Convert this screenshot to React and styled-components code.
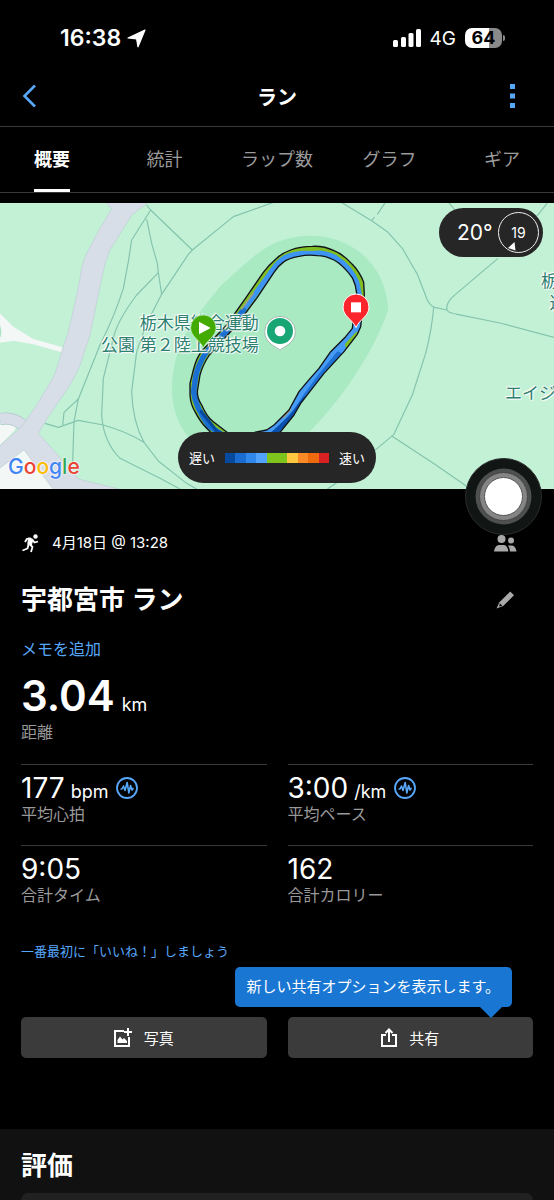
import React from 'react';
import styled, { createGlobalStyle } from 'styled-components';

const Global = createGlobalStyle`
  *, *::before, *::after { box-sizing: border-box; }
  body {
    margin: 0;
    background: #000;
    color: #fff;
    font-family: Inter, "Noto Sans CJK JP", sans-serif;
  }
  button { font-family: inherit; border: 0; background: none; padding: 0; color: inherit; cursor: pointer; }
  a { text-decoration: none; }
  svg { display: block; }
`;

const Page = styled.main`
  display: flex;
  flex-direction: column;
  min-height: 100vh;
`;

const StatusBar = styled.div`
  display: flex;
  align-items: center;
  justify-content: space-between;
  height: 66px;
  padding: 10px 52px 0 60px;
`;
const StatusGroup = styled.div`
  display: flex;
  align-items: center;
  gap: ${(p) => p.$gap}px;
`;
const Clock = styled.span`font-size: 23px; font-weight: 600;`;
const Network = styled.span`font-size: 19px;`;
const Battery = styled.div`
  position: relative;
  width: 37px;
  height: 20px;
  border-radius: 7px;
  background: linear-gradient(90deg, #fff 64%, #8a8a8a 64%);
  color: #000;
  font-size: 18px;
  line-height: 20px;
  font-weight: 700;
  text-align: center;
  &::after {
    content: "";
    position: absolute;
    right: -3px;
    top: 7px;
    width: 2px;
    height: 6px;
    border-radius: 0 2px 2px 0;
    background: #8a8a8a;
  }
`;

const Header = styled.header`
  display: grid;
  grid-template-columns: 40px 1fr 40px;
  align-items: center;
  height: 61px;
  padding: 0 22px;
  border-bottom: 1px solid #3a3a3a;
`;
const HeaderButton = styled.button`
  display: flex;
  justify-content: ${(p) => p.$align};
`;
const HeaderTitle = styled.h1`
  margin: 0;
  font-size: 20px;
  font-weight: 600;
  text-align: center;
`;

const Tabs = styled.nav`
  display: flex;
  justify-content: space-between;
  height: 66px;
  padding: 0 16px;
  border-bottom: 1px solid #3a3a3a;
`;
const Tab = styled.button`
  display: flex;
  justify-content: center;
  width: 72px;
  font-size: 18px;
  white-space: nowrap;
  font-weight: ${(p) => (p.$active ? 700 : 400)};
  color: ${(p) => (p.$active ? '#fff' : '#9b9b9b')};
  span {
    display: flex;
    align-items: center;
    height: 65px;
    border-bottom: 3px solid ${(p) => (p.$active ? '#fff' : 'transparent')};
  }
`;

const MapPanel = styled.section`
  position: relative;
  height: 286px;
  margin-top: 10px;
`;
const MapArt = styled.svg`
  width: 100%;
  height: 100%;
`;
const MapClip = styled.div`
  position: absolute;
  inset: 0;
  overflow: hidden;
`;
const MapLabel = styled.div`
  position: absolute;
  left: ${(p) => p.$x}px;
  top: ${(p) => p.$y}px;
  color: #2d8070;
  font-size: 17px;
  line-height: 22px;
  text-align: ${(p) => p.$align || 'left'};
  white-space: pre;
  text-shadow: 0 0 2px #fff, 0 0 2px #fff, 1px 1px 1px #fff, -1px -1px 1px #fff;
`;
const GoogleMark = styled.div`
  position: absolute;
  left: 8px;
  bottom: 8px;
  font-size: 21px;
  line-height: 28px;
  font-weight: 500;
  text-shadow: 0 0 2px #fff, 0 0 2px #fff;
`;
const Letter = styled.span`color: ${(p) => p.$color};`;
const Pins = styled.svg`
  position: absolute;
  inset: 0;
  width: 100%;
  height: 100%;
`;
const Weather = styled.div`
  position: absolute;
  top: 5px;
  right: 11px;
  display: flex;
  align-items: center;
  justify-content: space-between;
  width: 104px;
  height: 49px;
  padding: 0 4px 0 18px;
  border-radius: 25px;
  background: #262626;
  font-size: 21px;
`;
const Wind = styled.div`
  position: relative;
  display: flex;
  align-items: center;
  justify-content: center;
  width: 41px;
  height: 41px;
  border: 1px solid #eee;
  border-radius: 50%;
  font-size: 14px;
  svg { position: absolute; left: 9px; bottom: 1px; }
`;
const Legend = styled.div`
  position: absolute;
  bottom: 6px;
  left: 50%;
  display: flex;
  align-items: center;
  justify-content: space-between;
  width: 198px;
  height: 51px;
  padding: 0 11px;
  border-radius: 26px;
  background: #262626;
  font-size: 13px;
  transform: translateX(-50%);
`;
const Scale = styled.div`
  display: flex;
  width: 104px;
  height: 10px;
`;
const Swatch = styled.i`
  flex: 1;
  background: ${(p) => p.$color};
`;
const TouchButton = styled.button`
  position: absolute;
  right: 12px;
  bottom: -46px;
  width: 77px;
  height: 77px;
`;

const Content = styled.section`
  padding: 31px 21px 0;
`;
const Row = styled.div`
  display: flex;
  align-items: center;
  justify-content: space-between;
  height: ${(p) => p.$height}px;
  padding-right: 16px;
`;
const When = styled.div`
  display: flex;
  align-items: center;
  gap: 12px;
  font-size: 15px;
  line-height: 20px;
`;
const Title = styled.h2`
  margin: 0;
  font-size: 26px;
  line-height: 40px;
  font-weight: 600;
`;
const MemoLink = styled.a`
  display: block;
  font-size: 16px;
  line-height: 30px;
  color: #57a8fb;
`;
const Value = styled.div`
  display: flex;
  align-items: baseline;
  gap: ${(p) => (p.$large ? 7 : 6)}px;
  height: ${(p) => (p.$large ? 52 : 32)}px;
  font-size: ${(p) => (p.$large ? 42 : 28)}px;
  line-height: ${(p) => (p.$large ? 52 : 32)}px;
  font-weight: ${(p) => (p.$large ? 600 : 400)};
  svg { align-self: center; margin-left: 2px; }
`;
const Unit = styled.span`font-size: 18px; line-height: 20px; font-weight: 400;`;
const Label = styled.div`
  font-size: 16px;
  line-height: 20px;
  color: #999;
`;
const Distance = styled.div`padding: 6px 0 22px;`;
const Stats = styled.div`
  display: grid;
  grid-template-columns: 1fr 1fr;
  column-gap: 21px;
`;
const Stat = styled.div`
  height: 81px;
  padding-top: 7px;
  border-top: 1px solid #3a3a3a;
`;
const LikeLink = styled.a`
  display: block;
  margin-top: 15px;
  font-size: 13px;
  line-height: 20px;
  color: #57a8fb;
`;
const Actions = styled.div`
  position: relative;
  display: grid;
  grid-template-columns: 1fr 1fr;
  gap: 21px;
  margin-top: 56px;
`;
const Action = styled.button`
  display: flex;
  align-items: center;
  justify-content: center;
  gap: 12px;
  height: 41px;
  border-radius: 5px;
  background: #3b3b3b;
  font-size: 15px;
`;
const Tooltip = styled.div`
  position: absolute;
  right: 21px;
  bottom: 51px;
  padding: 0 12px 0 11px;
  border-radius: 5px;
  background: #1976d2;
  font-size: 15px;
  line-height: 40px;
  white-space: nowrap;
  &::after {
    content: "";
    position: absolute;
    right: 10px;
    top: 100%;
    border: 11px solid transparent;
    border-top-color: #1976d2;
    border-bottom: 0;
  }
`;
const Review = styled.section`
  display: flex;
  flex: 1;
  flex-direction: column;
  margin-top: 71px;
  padding: 17px 21px 0;
  background: #111;
`;
const Card = styled.div`
  flex: 1;
  margin-top: 7px;
  border-radius: 8px 8px 0 0;
  background: #212121;
`;

const GOOGLE = [['G', '#4285f4'], ['o', '#ea4335'], ['o', '#fbbc05'], ['g', '#4285f4'], ['l', '#34a853'], ['e', '#ea4335']];
const SPEEDS = ['#054a9e', '#1b6cd0', '#3087ec', '#52a3ff', '#7fc41c', '#7fc41c', '#fdc840', '#fa8a26', '#ee6a0f', '#d92023'];
const TABS = ['概要', '統計', 'ラップ数', 'グラフ', 'ギア'];
const STATS = [
  { value: '177', unit: 'bpm', label: '平均心拍', wave: true },
  { value: '3:00', unit: '/km', label: '平均ペース', wave: true },
  { value: '9:05', label: '合計タイム' },
  { value: '162', label: '合計カロリー' },
];

// Both edges of the recorded lap, drawn as one ring
const TRACK = 'M1093 300L1091 262Q1080 232 1057 208Q1030 178 1002 167Q970 152 937 154Q900 154 872 165Q845 175 830 190Q805 212 790 232L740 305L680 390L608 465Q590 485 580 525L570 565V600Q572 630 585 650Q600 680 620 700L660 740H790L842 710L882 660L902 625L972 535L1032 470L1072 418L1082 395ZM1070 295Q1068 270 1058 250Q1030 210 1002 195Q975 182 952 182Q925 178 897 184Q865 190 852 200Q835 212 822 232L770 310L710 390L628 480Q608 510 600 540L592 590Q592 610 605 630Q620 665 640 680L685 715H750L800 705L822 690L867 645L897 590L922 560L957 520L992 470L1037 425L1057 400Z';

const WaveIcon = () => (
  <svg width="22" height="22" viewBox="0 0 22 22" fill="none" stroke="#57a8fb">
    <circle cx="11" cy="11" r="10" strokeWidth="1.8" />
    <path d="M4.500 12H6L7.500 9L9 13.500L11.200 5.500L12.800 16L14.600 8.500L16 13L16.800 11.500H17.800" strokeWidth="1.6" strokeLinejoin="round" />
  </svg>
);

function MapDrawing() {
  return (
    <MapArt viewBox="0 24 1662 858" preserveAspectRatio="none" aria-hidden="true">
      <clipPath id="track"><path clipRule="evenodd" d={TRACK} /></clipPath>
      <rect y="24" width="1662" height="858" fill="#c3f1d6" />
      <path fill="#a9eac3" d="M840 138C780 160 730 210 660 275C600 345 555 410 535 465C505 560 510 640 550 705C600 790 780 830 840 790L927 712C1000 640 1110 500 1165 345C1160 250 1110 170 1012 135C950 115 890 120 840 138Z" />
      <g fill="#f3f7f6">
        <path d="M0 355L40 395L100 432L188 457L185 472L100 448L40 437L0 443Z" />
        <path d="M0 690H50L45 705L0 750ZM0 820L72 764L160 882H0Z" />
      </g>
      <path d="M0 390Q8 410 0 430Z" fill="#a9e6c2" />
      <path d="M0 672Q40 665 68 690" fill="none" stroke="#b5c3cf" strokeWidth="36" />
      <path d="M0 672Q40 665 68 690" fill="none" stroke="#d8dee8" strokeWidth="32" />
      <path fill="#d8dee8" stroke="#bccdd4" strokeWidth="2" d="M318 22L335 42L300 100L268 160Q245 200 240 250L228 310L205 410L185 470Q170 530 155 555L110 630L65 695L-4 755V822L72 764L160 884H365L235 852Q190 800 165 770L115 715Q130 690 145 665L210 570Q240 520 250 480L270 420L305 250Q315 200 330 165L395 60L445 22Z" />
      <g fill="none" stroke="#84c3ad" strokeWidth="3.500" strokeLinejoin="round">
        <path d="M440 30L452 45L577 165M452 45L395 135L385 200L370 280Q345 360 300 450L235 612L222 680L218 800" />
        <path d="M440 72L455 145L472 205L475 233L485 298" />
        <path d="M840 15L700 65L577 165L565 178L485 298L440 385L410 470L395 590Q398 680 432 742L475 798L560 865L590 882" />
        <path d="M475 233L410 300Q350 380 340 430L310 550L305 660Q310 740 360 790Q420 820 480 850L540 882" />
        <path d="M135 685L175 697L235 676L310 690Q380 710 432 742M235 612L192 652L188 690" />
        <path d="M1027 24L1115 77L1162 110L1207 160L1252 238L1282 315Q1290 332 1304 337L1340 345" />
        <path d="M1155 24L1132 58M1124 66L1115 77M1347 24L1367 48M1642 24L1612 62M1494 190L1362 302Q1330 332 1345 350Q1350 354 1372 358L1500 384L1662 427" />
        <path d="M1301 337Q1296 400 1277 475L1237 600L1190 700L1182 718L1120 770L1030 850L982 882M1174 722L1300 805L1402 875" />
      </g>
      <g fill="none" strokeLinejoin="round" strokeLinecap="round" clipPath="url(#track)">
        <rect x="560" y="140" width="560" height="620" fill="#7fbd22" />
        <path d="M1078 300L1070 262Q1050 215 1006 188Q970 170 937 176Q890 172 855 188Q835 200 818 225L755 312L695 392L618 472Q594 510 587 545L581 590Q585 635 628 694L680 728" stroke="#3d94f3" strokeWidth="16" />
        <path d="M730 345L695 392L618 472Q594 510 587 545L581 590Q585 635 628 694L680 728" stroke="#1b6fd0" strokeWidth="16" />
        <path d="M604 650L650 708L690 730" stroke="#064a9f" strokeWidth="10" />
        <path d="M1070 380L1058 410L1012 458L965 513L910 585L875 645L820 705L760 730" stroke="#469bf5" strokeWidth="60" />
        <path d="M1015 478L960 545L920 600L887 650L830 712L780 738" stroke="#1f72d4" strokeWidth="16" />
        <path d="M915 612L870 670L815 720" stroke="#084fae" strokeWidth="14" />
        <path d="M1072 420L1044 450" stroke="#7fbd22" strokeWidth="18" />
        <path d="M760 294L725 342M850 668L872 642" stroke="#a5a273" strokeWidth="4" />
      </g>
      <path fill="none" stroke="#101418" strokeWidth="4" strokeLinejoin="round" d={TRACK} />
    </MapArt>
  );
}

function MapPins() {
  return (
    <Pins viewBox="0 24 1662 858" preserveAspectRatio="none" aria-hidden="true">
      <path d="M610 458C600 435 572 425 572 398A38 38 0 0 1 648 398C648 425 620 435 610 458Z" fill="#43aa00" stroke="#c3f1c5" strokeWidth="2" />
      <path d="M597 380L632 399L597 418Z" fill="#fff" />
      <path d="M840 466C832 456 794 446 794 410A46 46 0 0 1 886 410C886 446 848 456 840 466Z" fill="#fff" stroke="#a2b8ac" strokeWidth="3" />
      <circle cx="840" cy="408" r="39" fill="#18a675" />
      <circle cx="840" cy="408" r="16" fill="#fff" />
      <path d="M1068 398C1058 373 1029 365 1029 336A39 39 0 0 1 1107 336C1107 365 1078 373 1068 398Z" fill="#fc252b" stroke="#fff" strokeWidth="3" />
      <rect x="1053" y="322" width="30" height="30" fill="#fff" />
    </Pins>
  );
}

export default function App() {
  return (
    <Page>
      <Global />
      <StatusBar>
        <StatusGroup $gap={6}>
          <Clock>16:38</Clock>
          <svg width="19" height="19" viewBox="0 0 19 19" fill="#fff" stroke="#fff" strokeWidth="1.2" strokeLinejoin="round"><path d="M18 1L11 17.800L9.600 9.800L1 9Z" /></svg>
        </StatusGroup>
        <StatusGroup $gap={9}>
          <svg width="28" height="18" viewBox="0 0 28 18" fill="#fff">
            <rect y="11" width="5" height="7" rx="1.500" /><rect x="8" y="8" width="5" height="10" rx="1.500" /><rect x="15.500" y="4" width="5" height="14" rx="1.500" /><rect x="23" width="5" height="18" rx="1.500" />
          </svg>
          <Network>4G</Network>
          <Battery>64</Battery>
        </StatusGroup>
      </StatusBar>

      <Header>
        <HeaderButton $align="flex-start" aria-label="戻る">
          <svg width="14" height="24" viewBox="0 0 14 24" fill="none" stroke="#57a8fb" strokeWidth="2.600"><path d="M13 1.500L2.500 12L13 22.500" /></svg>
        </HeaderButton>
        <HeaderTitle>ラン</HeaderTitle>
        <HeaderButton $align="flex-end" aria-label="メニュー">
          <svg width="22" height="24" viewBox="0 0 22 24" fill="#57a8fb"><path d="M0 0h5v5h-5zM0 9.500h5v5h-5zM0 19h5v5h-5z" /></svg>
        </HeaderButton>
      </Header>

      <Tabs>
        {TABS.map((tab, i) => <Tab key={tab} $active={i === 0}><span>{tab}</span></Tab>)}
      </Tabs>

      <MapPanel>
        <MapDrawing />
        <MapClip>
          <MapLabel $x={101} $y={109} $align="right">{'栃木県総合運動\n公園 第２陸上競技場'}</MapLabel>
          <MapLabel $x={541} $y={67}>{'栃\n\u2002運'}</MapLabel>
          <MapLabel $x={505} $y={179}>エイジ</MapLabel>
          <GoogleMark>{GOOGLE.map(([c, color], i) => <Letter key={i} $color={color}>{c}</Letter>)}</GoogleMark>
        </MapClip>
        <MapPins />
        <Weather>
          20°
          <Wind>
            19
            <svg width="8" height="9" viewBox="0 0 8 9" fill="#fff"><path d="M6.500 0L7.500 8.500L0 6Z" /></svg>
          </Wind>
        </Weather>
        <Legend>
          遅い
          <Scale>{SPEEDS.map((c, i) => <Swatch key={i} $color={c} />)}</Scale>
          速い
        </Legend>
        <TouchButton aria-label="AssistiveTouch">
          <svg width="77" height="77" viewBox="0 0 77 77">
            <circle cx="38.500" cy="38.500" r="38" fill="#111514" stroke="#2a2d2c" />
            <circle cx="38.500" cy="38.500" r="28" fill="#4e504f" />
            <circle cx="38.500" cy="38.500" r="24" fill="#858585" stroke="#444" />
            <circle cx="38.500" cy="38.500" r="19" fill="#fff" stroke="#555" />
          </svg>
        </TouchButton>
      </MapPanel>

      <Content>
        <Row $height={46}>
          <When>
            <svg width="19" height="19" viewBox="0 0 19 19" fill="none" stroke="#fff" strokeWidth="1.800" strokeLinejoin="round">
              <circle cx="14.500" cy="2.500" r="2.200" fill="#fff" stroke="none" />
              <path d="M7.500 4L11.800 5.200L10.500 11L6.800 10.500Z" fill="#fff" strokeWidth="1" />
              <path d="M4 8L6 4.800L10 4.500M9 10.500L11.500 13L10 18M7.500 10.500L6.500 14.500L1.500 16.500M11.500 6L13.500 8.500L17 7.500" />
            </svg>
            4月18日 @ 13:28
          </When>
          <svg width="23" height="17" viewBox="0 0 23 17" fill="#a9a9a9">
            <circle cx="7.500" cy="4" r="4" /><circle cx="17" cy="5.500" r="3" />
            <path d="M0 16.500Q1 10 5 10H10Q13.500 10 14.300 16.500ZM14 10.500H18Q21.500 11 22.500 16.500H16Q16 13 14 10.500Z" />
          </svg>
        </Row>
        <Row $height={68}>
          <Title>宇都宮市 ラン</Title>
          <svg width="21" height="18" viewBox="0 0 21 18" fill="#a9a9a9">
            <path d="M14.200.5L18 4.300L7.200 15L.5 17.500L3.400 11.200Z" />
            <path d="M3.800 12.300L6.200 14.700L3.200 15.600Z" fill="#000" />
          </svg>
        </Row>
        <MemoLink href="#memo">メモを追加</MemoLink>
        <Distance>
          <Value $large>3.04<Unit>km</Unit></Value>
          <Label>距離</Label>
        </Distance>
        <Stats>
          {STATS.map((s) => (
            <Stat key={s.label}>
              <Value>{s.value}{s.unit && <Unit>{s.unit}</Unit>}{s.wave && <WaveIcon />}</Value>
              <Label>{s.label}</Label>
            </Stat>
          ))}
        </Stats>
        <LikeLink href="#like">一番最初に「いいね！」しましょう</LikeLink>
        <Actions>
          <Action>
            <svg width="18" height="19" viewBox="0 0 18 19" fill="none" stroke="#fff" strokeWidth="2"><path d="M10 3H1V18H15V9M14 0V8M10 4H18" /><path d="M3.500 15V12L6 8.500L8.500 11.500L10 10L13 13V15Z" fill="#fff" stroke="none" /></svg>
            写真
          </Action>
          <Action>
            <svg width="16" height="19" viewBox="0 0 16 19" fill="none" stroke="#fff" strokeWidth="2"><path d="M5 7H1V18H15V7H11M8 14V2M4.500 5L8 1.500L11.500 5" /></svg>
            共有
          </Action>
          <Tooltip role="tooltip">新しい共有オプションを表示します。</Tooltip>
        </Actions>
      </Content>

      <Review>
        <Title>評価</Title>
        <Card />
      </Review>
    </Page>
  );
}
